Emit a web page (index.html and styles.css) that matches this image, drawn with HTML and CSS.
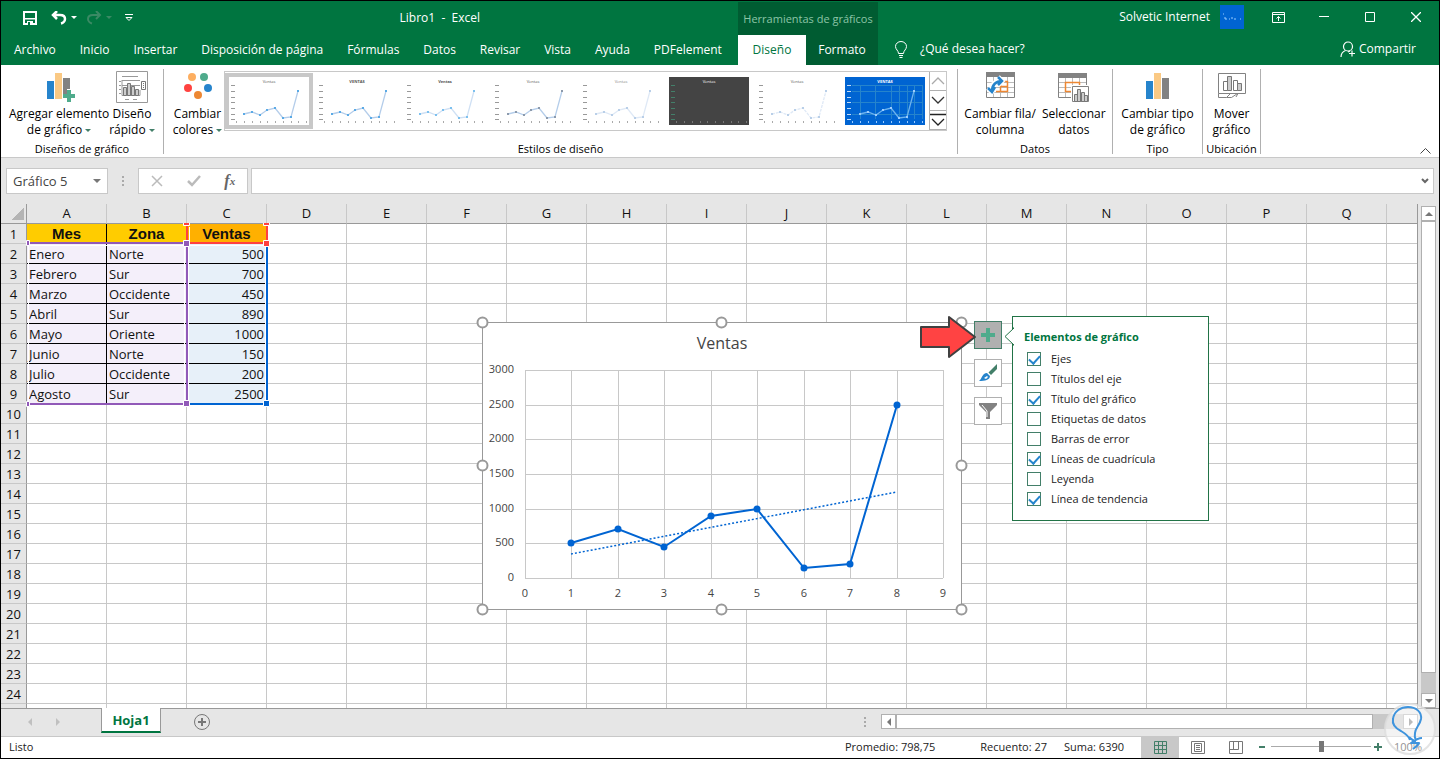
FILE: index.html
```html
<!DOCTYPE html>
<html lang="es">
<head>
  <meta charset="UTF-8" />
  <meta name="viewport" content="width=device-width, initial-scale=1.0"/>
  <title>Libro1 - Excel</title>
  <link rel="stylesheet" href="styles.css">
</head>
<body>
  <header class="header">
    <div class="header-left">
      <div class="title-row">
        <button class="icon-btn save" aria-label="Guardar">
          <svg width="14" height="14" viewBox="0 0 14 14"><path d="M1 1h12v12H1z" fill="none" stroke="#fff" stroke-width="2"/><path d="M2 7h10v1.500H2zM4 10h6v4H4z" fill="#fff"/><path d="M5 11h2v3H5z" fill="#007540"/></svg>
        </button>
        <button class="icon-btn undo" aria-label="Deshacer">
          <svg width="26" height="14" viewBox="0 0 26 14"><path d="M6 0L2 4l4 4M2 4h7c4 0 5 2 5 4s-2 4-4 4.500" fill="none" stroke="#fff" stroke-width="2.500"/><path d="M20 5h6l-3 3z" fill="#fff"/></svg>
        </button>
        <button class="icon-btn redo" aria-label="Rehacer">
          <svg width="26" height="14" viewBox="0 0 26 14"><path d="M10 0l4 4-4 4M14 4H7C3 4 2 6 2 8s2 4 4 4.500" fill="none" stroke="#3a8a64" stroke-width="2"/><path d="M20 5h6l-3 3z" fill="#3a8a64"/></svg>
        </button>
        <button class="icon-btn customize" aria-label="Personalizar barra">
          <svg width="8" height="8" viewBox="0 0 8 8"><path d="M0 .5h8M1 3.500l3 3 3-3z" fill="none" stroke="#fff"/></svg>
        </button>
        <span class="doc-title">Libro1 &nbsp;-&nbsp; Excel</span>
      </div>
      <nav class="tabs">
        <a href="#">Archivo</a>
        <a href="#">Inicio</a>
        <a href="#">Insertar</a>
        <a href="#">Disposición de página</a>
        <a href="#">Fórmulas</a>
        <a href="#">Datos</a>
        <a href="#">Revisar</a>
        <a href="#">Vista</a>
        <a href="#">Ayuda</a>
        <a href="#">PDFelement</a>
      </nav>
    </div>
    <div class="context">
      <div class="context-title">Herramientas de gráficos</div>
      <nav class="context-tabs">
        <a href="#" class="active">Diseño</a>
        <a href="#">Formato</a>
      </nav>
    </div>
    <div class="header-right">
      <div class="window-row">
        <span>Solvetic Internet</span>
        <span class="avatar"><svg width="24" height="24" viewBox="0 0 24 24"><path d="M3 9h1M5 12v2h2M9 14h1M11 13h2M14 14h2M20 14h1" fill="none" stroke="#9cf"/></svg></span>
        <button class="icon-btn win" aria-label="Opciones de cinta">
          <svg width="13" height="11" viewBox="0 0 13 11"><path d="M.5.500h12v10H.5zM.5 2.500h12M6.500 9V4.500M4.500 6.500l2-2 2 2" fill="none" stroke="#fff"/></svg>
        </button>
        <button class="icon-btn win" aria-label="Minimizar">
          <svg width="10" height="10" viewBox="0 0 10 10"><path d="M0 4.500h10" stroke="#fff"/></svg>
        </button>
        <button class="icon-btn win" aria-label="Maximizar">
          <svg width="10" height="10" viewBox="0 0 10 10"><path d="M.5.500h9v9h-9z" fill="none" stroke="#fff"/></svg>
        </button>
        <button class="icon-btn win" aria-label="Cerrar">
          <svg width="10" height="10" viewBox="0 0 10 10"><path d="M0 0l10 10M10 0L0 10" stroke="#fff" stroke-width="1.300"/></svg>
        </button>
      </div>
      <div class="search-row">
        <svg width="12" height="17" viewBox="0 0 12 17"><path d="M3.500 12.500c0-3-3-4-3-7a5.500 5 0 0 1 11 0c0 3-3 4-3 7zM4 14.500h4M4.500 16.500h3" fill="none" stroke="#fff"/></svg>
        <a href="#">¿Qué desea hacer?</a>
        <button class="share">
          <svg width="16" height="17" viewBox="0 0 16 17"><circle cx="8" cy="5.500" r="4.500" fill="none" stroke="#fff" stroke-width="1.200"/><path d="M1 16c0-3 2-5.500 4.500-6.500M8 11l2-1M12 9.500v6M9 12.500h6" fill="none" stroke="#fff" stroke-width="1.200"/></svg>
          Compartir
        </button>
      </div>
    </div>
  </header>

  <section class="ribbon">
    <div class="group layouts">
      <div class="tools">
        <button class="tool">
          <svg width="32" height="32" viewBox="0 0 32 32"><path fill="#2684cc" d="M4 10h7v18H4z"/><path fill="#fac984" d="M12 2h7v26h-7z"/><path fill="#828282" d="M20 7h7v11h-3v5h-4z"/><path fill="#4fab8c" d="M24 19h4v4h4v4h-4v4h-4v-4h-4v-4h4z"/></svg>
          <span>Agregar elemento<br>de gráfico <i class="caret"></i></span>
        </button>
        <button class="tool">
          <svg width="32" height="32" viewBox="0 0 32 32"><g fill="none" stroke="#999"><path d="M.5.500h31v31H.5z"/><path d="M6 5.500h16M3 10.500h2M3 14.500h2M3 18.500h2M3 22.500h2M9 28.500h4M17 28.500h4M6 9.500h18M6 14.500h18M6 9v15.500h18V19" /></g><path fill="#ccc" stroke="#777" d="M7.500 16.500h3v8h-3zM11.500 12.500h3v12h-3zM15.500 15.500h3v9h-3zM19.500 18.500h3v6h-3z"/><path fill="#fff" stroke="#777" d="M25.500 10.500h4v8h-4z"/><path stroke="#777" d="M27 12.500h1M27 14.500h1M27 16.500h1"/></svg>
          <span>Diseño<br>rápido <i class="caret"></i></span>
        </button>
      </div>
      <div class="group-name">Diseños de gráfico</div>
    </div>

    <div class="group styles">
      <div class="tools">
        <button class="tool colors">
          <svg width="32" height="32" viewBox="0 0 32 32"><circle cx="10" cy="6" r="4" fill="#fdae60"/><circle cx="22" cy="6" r="4" fill="#4fab8c"/><circle cx="6" cy="17" r="4" fill="#ff4340"/><circle cx="26" cy="17" r="4" fill="#2684cc"/><circle cx="16" cy="24" r="4" fill="#ed8733"/></svg>
          <span>Cambiar<br>colores <i class="caret"></i></span>
        </button>
        <div class="gallery">
          <div class="thumbs" id="thumbs"></div>
          <div class="gallery-nav">
            <button aria-label="Anterior"><svg width="14" height="8" viewBox="0 0 14 8"><path d="M1 7l6-6 6 6" fill="none" stroke="#aaa" stroke-width="1.300"/></svg></button>
            <button aria-label="Siguiente"><svg width="14" height="8" viewBox="0 0 14 8"><path d="M1 1l6 6 6-6" fill="none" stroke="#333" stroke-width="1.300"/></svg></button>
            <button aria-label="Más"><svg width="16" height="14" viewBox="0 0 16 14"><path d="M0 1.500h16M2 6l6 6 6-6" fill="none" stroke="#222" stroke-width="1.300"/></svg></button>
          </div>
        </div>
      </div>
      <div class="group-name">Estilos de diseño</div>
    </div>

    <div class="group data">
      <div class="tools">
        <button class="tool">
          <svg width="32" height="32" viewBox="0 0 32 32"><path fill="#fff" stroke="#828282" d="M2.500 2.500h28v24h-28z"/><path fill="#828282" d="M2 1h29v5H2z"/><path d="M3 11.500h27M3 16.500h27M3 21.500h27M9.500 6v20M16.500 6v20M23.500 6v20" stroke="#bbb"/><path d="M16.500 10.500h7v10h-7zM12 20.500h11.500M17 15.500h6.500" fill="none" stroke="#ed8733" stroke-width="1.500"/><path d="M7 20c0-6 4-10 10-10M14 6l4 4-4 4M4 17l3.500 4L11 17" fill="none" stroke="#fff" stroke-width="5"/><path d="M8 20c0-6 4-10 10-10M14 6l4 4-4 4M4 17l4 4 3-5" fill="none" stroke="#2684cc" stroke-width="2.500"/></svg>
          <span>Cambiar fila/<br>columna</span>
        </button>
        <button class="tool">
          <svg width="32" height="32" viewBox="0 0 32 32"><path fill="#fff" stroke="#828282" d="M.5 2.500h28v24H.5z"/><path fill="#828282" d="M0 2h29v5H0z"/><path d="M1 11.500h27M1 16.500h27M1 21.500h27M7.500 7v19M14.500 7v19M21.500 7v19" stroke="#bbb"/><path d="M14 20.500H7.500v-9h14V15" fill="none" stroke="#ed8733" stroke-width="1.500"/><path fill="#fff" d="M13 14h18v18H13z"/><path fill="#fff" stroke="#828282" d="M14.500 15.500h16v15h-16z"/><path fill="#ccc" stroke="#777" d="M16.500 23.500h3v7h-3zM19.500 18.500h3v12h-3zM23.500 21.500h3v9h-3zM26.500 24.500h3v6h-3z"/></svg>
          <span>Seleccionar<br>datos</span>
        </button>
      </div>
      <div class="group-name">Datos</div>
    </div>

    <div class="group type">
      <div class="tools">
        <button class="tool">
          <svg width="32" height="32" viewBox="0 0 32 32"><path fill="#2684cc" d="M5 10h7v18H5z"/><path fill="#fac984" d="M13 2h7v26h-7z"/><path fill="#828282" d="M21 7h7v21h-7z"/></svg>
          <span>Cambiar tipo<br>de gráfico</span>
        </button>
      </div>
      <div class="group-name">Tipo</div>
    </div>

    <div class="group place">
      <div class="tools">
        <button class="tool">
          <svg width="32" height="32" viewBox="0 0 32 32"><path fill="#fff" stroke="#828282" d="M2.500 2.500h27v20h-27zM2.500 22.500v4h8l5 0 6-4M10.500 26.500l4-4M20 26l2-3.500"/><path fill="#fff" stroke="#777" d="M7.500 10.500h4v9h-4zM17.500 9.500h4v10h-4z"/><path fill="#ccc" stroke="#777" d="M11.500 5.500h4v14h-4zM21.500 12.500h4v7h-4z"/></svg>
          <span>Mover<br>gráfico</span>
        </button>
      </div>
      <div class="group-name">Ubicación</div>
    </div>

    <button class="icon-btn collapse" aria-label="Contraer la cinta">
      <svg width="11" height="6" viewBox="0 0 11 6"><path d="M.5 5.500l5-5 5 5" fill="none" stroke="#444"/></svg>
    </button>
  </section>

  <section class="formula-bar">
    <div class="name-box">
      <select aria-label="Cuadro de nombres"><option>Gráfico 5</option></select>
    </div>
    <span class="grip"></span>
    <div class="fx-buttons">
      <button class="icon-btn" aria-label="Cancelar"><svg width="12" height="12" viewBox="0 0 12 12"><path d="M1 1l10 10M11 1L1 11" stroke="#bbb" stroke-width="1.500"/></svg></button>
      <button class="icon-btn" aria-label="Introducir"><svg width="14" height="12" viewBox="0 0 14 12"><path d="M1 6l4 4 8-9" fill="none" stroke="#bbb" stroke-width="2.500"/></svg></button>
      <button class="icon-btn fx" aria-label="Insertar función">f<small>x</small></button>
    </div>
    <div class="formula">
      <input type="text" aria-label="Barra de fórmulas">
      <svg width="8" height="6" viewBox="0 0 8 6"><path d="M1 1l3 3 3-3" fill="none" stroke="#666" stroke-width="2"/></svg>
    </div>
  </section>

  <main class="workspace">
    <div class="sheet">
      <table class="cells" id="cells"></table>

      <!-- ranges used by the chart -->
      <svg class="ranges" width="246" height="186" viewBox="0 0 246 186">
        <g fill="none" stroke="#fff">
          <path d="M2.500 23v156M3 22.500h156M158.500 22v158M162.500 22v158M163 22.500h76M239.500 22v158M163.500 4v15"/>
        </g>
        <g fill="none" stroke-width="2">
          <path stroke="#9159b8" d="M2 20h159v161H2"/>
          <path stroke="#0064d2" d="M241 20v161h-80"/>
          <path stroke="#ff4040" d="M161 2v18h80V2"/>
        </g>
        <g stroke="#fff">
          <path fill="#9159b8" d="M157.500 17.500h6v6h-6zM157.500 177.500h6v6h-6zM.5 17.500h3v5h-3zM.5 178.500h3v5h-3z"/>
          <path fill="#ff4040" d="M157.500-.5h6v3h-6zM237.500-.5h6v3h-6zM237.500 17.500h6v6h-6z"/>
          <path fill="#0064d2" d="M237.500 177.500h6v6h-6z"/>
        </g>
      </svg>

      <svg class="chart" id="chart" width="494" height="302" viewBox="0 0 494 302"></svg>

      <div class="chart-buttons">
        <button class="pressed" aria-label="Elementos de gráfico"><svg width="14" height="14" viewBox="0 0 14 14"><path d="M5 0h4v5h5v4H9v5H5V9H0V5h5z" fill="#4fab8c"/></svg></button>
        <button aria-label="Estilos de gráfico"><svg width="20" height="20" viewBox="0 0 20 20"><path d="M19 1v5l-6 6-2.500-2.500z" fill="#437f69"/><path d="M9 10l3 3c0 4-5 5-11 5 3-2 3-8 8-8z" fill="#2684cc"/><path d="M6 15l3-2 1 1-2 2z" fill="#fff"/></svg></button>
        <button aria-label="Filtros de gráfico"><svg width="20" height="20" viewBox="0 0 20 20"><path d="M1 2h18v2l-7 7v7H8v-7L1 4z" fill="#828282"/><path d="M4 4l5 6v6" fill="none" stroke="#fff"/></svg></button>
      </div>

      <div class="elements-panel">
        <svg class="pointer" width="10" height="19" viewBox="0 0 10 19"><path d="M10 0v1L1 9.500l9 8.500v1" fill="#fff" stroke="#217346"/></svg>
        <h2>Elementos de gráfico</h2>
        <label><input type="checkbox" checked>Ejes</label>
        <label><input type="checkbox">Títulos del eje</label>
        <label><input type="checkbox" checked>Título del gráfico</label>
        <label><input type="checkbox">Etiquetas de datos</label>
        <label><input type="checkbox">Barras de error</label>
        <label><input type="checkbox" checked>Líneas de cuadrícula</label>
        <label><input type="checkbox">Leyenda</label>
        <label><input type="checkbox" checked>Línea de tendencia</label>
      </div>

      <svg class="red-arrow" width="60" height="44" viewBox="0 0 60 44"><path d="M3 12h28V2l26 20-26 20V32H3z" fill="#ff4343" stroke="#404040" stroke-width="2" stroke-linejoin="round"/></svg>
    </div>
    <div class="v-scroll">
      <button aria-label="Subir"><i class="tri up"></i></button>
      <div class="v-thumb"></div>
      <div class="v-track"></div>
      <button aria-label="Bajar"><i class="tri down"></i></button>
    </div>
  </main>

  <section class="sheet-bar">
    <div class="sheet-nav"><i class="tri left"></i><i class="tri right"></i></div>
    <a href="#" class="sheet-tab">Hoja1</a>
    <button class="icon-btn add-sheet" aria-label="Hoja nueva"><svg width="16" height="16" viewBox="0 0 16 16"><circle cx="8" cy="8" r="7.500" fill="none" stroke="#777"/><path d="M8 4v8M4 8h8" stroke="#777" stroke-width="2"/></svg></button>
    <span class="grip"></span>
    <div class="h-scroll">
      <button aria-label="Izquierda"><i class="tri left"></i></button>
      <div class="h-thumb"></div>
      <div class="h-track"></div>
      <button aria-label="Derecha"><i class="tri right"></i></button>
    </div>
  </section>

  <footer class="status">
    <span>Listo</span>
    <span class="average">Promedio: 798,75</span>
    <span class="count">Recuento: 27</span>
    <span class="sum">Suma: 6390</span>
    <button class="view pressed" aria-label="Normal"><svg width="13" height="13" viewBox="0 0 13 13"><path d="M.5.500h12v12H.5zM.5 4.500h12M.5 8.500h12M4.500.500v12M8.500.500v12" fill="none" stroke="#437f69"/></svg></button>
    <button class="view" aria-label="Diseño de página"><svg width="14" height="13" viewBox="0 0 14 13"><path d="M.5.500h13v12H.5zM3.500 2.500h7v8h-7zM5 4.500h4M5 6.500h4M5 8.500h4" fill="none" stroke="#777"/></svg></button>
    <button class="view" aria-label="Salto de página"><svg width="14" height="13" viewBox="0 0 14 13"><path d="M.5.500h13v12H.5zM4.500.500v8M9.500.500v8M.5 8.500h9" fill="none" stroke="#777"/></svg></button>
    <button class="zoom-btn" aria-label="Alejar"><svg width="8" height="8" viewBox="0 0 8 8"><path d="M1 4h6" stroke="#437f69" stroke-width="2"/></svg></button>
    <input class="zoom" type="range" min="0" max="100" value="50" aria-label="Zoom">
    <button class="zoom-btn" aria-label="Acercar"><svg width="8" height="8" viewBox="0 0 8 8"><path d="M0 4h8M4 0v8" stroke="#437f69" stroke-width="2"/></svg></button>
    <span class="percent">100%</span>
  </footer>

  <svg class="watermark" width="56" height="56" viewBox="0 0 56 56">
    <circle cx="28" cy="28" r="25" fill="#fff" fill-opacity="0.500" stroke="#ddd" stroke-opacity="0.800" stroke-width="2"/>
    <path d="M28 39c-1-4-4-6-9-9-6-3-9-7-8-12C12 10 19 6 26 6c8 0 14 5 13 12-1 6-6 9-6 14 0 3-1 5 1 6M27 36c2 2 4 4 7 4M40 37c-3 0-7 2-11 5h8c-1 2-3 4-6 6" fill="none" stroke="#3f94dd" stroke-width="2" stroke-linejoin="round"/>
  </svg>

  <script>
    const rows = [
      ["Mes", "Zona", "Ventas"],
      ["Enero", "Norte", 500],
      ["Febrero", "Sur", 700],
      ["Marzo", "Occidente", 450],
      ["Abril", "Sur", 890],
      ["Mayo", "Oriente", 1000],
      ["Junio", "Norte", 150],
      ["Julio", "Occidente", 200],
      ["Agosto", "Sur", 2500]
    ];
    const letters = [..."ABCDEFGHIJKLMNOPQ", ""];

    // cells
    let html = "<tr><th class='corner'></th>" + letters.map(l => `<th>${l}</th>`).join("") + "</tr>";
    for (let r = 0; r < 25; r++) {
      html += `<tr><th>${r < 24 ? r + 1 : ""}</th>`;
      letters.forEach((l, c) => {
        const value = rows[r] && rows[r][c] !== undefined ? rows[r][c] : "";
        let cls = "";
        if (value !== "") {
          cls = r === 0 ? "head" : "filled";
          if (c === 2) cls += " sales";
        }
        html += `<td class="${cls}">${value}</td>`;
      });
      html += "</tr>";
    }
    document.getElementById("cells").innerHTML = html;

    // chart
    const sales = rows.slice(1).map(row => row[2]);
    const px = n => Math.round(51 + n * 46.44);
    const py = v => Math.round(263 - v * 208 / 3000);
    let svg = '<rect class="frame" x="8.500" y="7.500" width="479" height="287"/>';
    svg += '<text class="chart-title" x="248" y="34">Ventas</text>';
    for (let v = 0; v <= 3000; v += 500) {
      svg += `<path class="grid" d="M51 ${py(v) + 0.5}h418"/><text class="y-label" x="40" y="${py(v) + 3}">${v}</text>`;
    }
    for (let n = 0; n <= 9; n++) {
      svg += `<path class="grid" d="M${px(n) + 0.5} 55v208"/><text class="x-label" x="${px(n)}" y="282">${n}</text>`;
    }
    svg += `<path class="trend" d="M${px(1)} ${py(340)}L${px(8)} ${py(1245)}"/>`;
    svg += `<polyline class="line" points="${sales.map((v, i) => px(i + 1) + "," + py(v)).join(" ")}"/>`;
    sales.forEach((v, i) => {
      svg += `<circle class="dot" cx="${px(i + 1)}" cy="${py(v)}" r="3.500"/>`;
    });
    [[8.5, 7.5], [247.5, 7.5], [487.5, 7.5], [8.5, 150.5], [487.5, 150.5], [8.5, 294.5], [247.5, 294.5], [487.5, 294.5]].forEach(p => {
      svg += `<circle class="handle" cx="${p[0]}" cy="${p[1]}" r="5"/>`;
    });
    document.getElementById("chart").innerHTML = svg;

    // style gallery
    const looks = ["selected", "strong", "soft", "gray", "faint", "dark", "dashed", "blue"];
    const titles = ["Ventas", "VENTAS", "Ventas", "Ventas", "Ventas", "Ventas", "Ventas", "VENTAS"];
    const mini = [[15, 37], [23, 35], [31, 38], [38, 33], [46, 31], [54, 41], [62, 40], [69, 14]];
    const labelsY = [8, 14, 20, 25, 31, 37, 42];
    document.getElementById("thumbs").innerHTML = looks.map((look, i) => {
      let s = `<button class="thumb ${look}" aria-label="Estilo ${i + 1}"><svg width="80" height="48" viewBox="0 0 80 48">`;
      s += `<text x="40" y="6">${titles[i]}</text>`;
      s += `<path class="mini-grid" d="M7 8.500h70M7 14.500h70M7 25.500h70M7 37.500h70M15.500 8v34M30.500 8v34M46.500 8v34M54.500 8v34M62.500 8v34M69.500 8v34M77.500 8v34"/>`;
      s += `<path class="mini-label" d="${labelsY.map(y => `M2 ${y + 0.5}h4`).join("")}"/>`;
      for (let n = 0; n < 10; n++) {
        s += `<rect class="mini-num" x="${7 + n * 8 - Math.floor(n / 4)}" y="44" width="1" height="2"/>`;
      }
      s += `<polyline points="${mini.join(" ")}"/>`;
      mini.forEach(p => {
        s += `<rect class="mini-dot" x="${p[0] - 1}" y="${p[1] - 1}" width="2" height="2"/>`;
      });
      return s + "</svg></button>";
    }).join("");
  </script>
</body>
</html>
```
FILE: styles.css
```css
* {
  box-sizing: border-box;
}

body {
  margin: 0;
  height: 100vh;
  display: flex;
  flex-direction: column;
  border: 1px solid #000;
  font-family: "Open Sans", "Noto Sans", sans-serif;
  font-size: 12px;
  line-height: 16px;
  color: #222;
  background: #e6e6e6;
  overflow: hidden;
}

button,
input,
select {
  font: inherit;
  color: inherit;
  padding: 0;
  margin: 0;
  border: none;
  background: none;
}

a {
  color: inherit;
  text-decoration: none;
}

svg {
  display: block;
  flex-shrink: 0;
}

.icon-btn {
  display: flex;
  align-items: center;
  justify-content: center;
}

/* header */
.header {
  display: flex;
  height: 64px;
  flex-shrink: 0;
  background: #007540;
  color: #fff;
}

.header-left {
  width: 737px;
  display: flex;
  flex-direction: column;
}

.title-row {
  display: flex;
  align-items: center;
  height: 34px;
  padding-left: 22px;
}

.undo {
  margin-left: 14px;
}

.redo {
  margin-left: 9px;
}

.customize {
  margin-left: 13px;
}

.doc-title {
  margin-left: auto;
  margin-right: 258px;
}

.tabs {
  flex: 1;
  display: flex;
  align-items: center;
  justify-content: space-between;
  padding: 0 16px 0 13px;
}

.context {
  width: 140px;
  margin-top: 1px;
  display: flex;
  flex-direction: column;
  background: #005c32;
}

.context-title {
  height: 33px;
  line-height: 33px;
  text-align: center;
  font-size: 11px;
  color: #8cc5a7;
}

.context-tabs {
  flex: 1;
  display: flex;
}

.context-tabs a {
  flex: 1;
  line-height: 30px;
  text-align: center;
}

.context-tabs .active {
  flex: 0 0 68px;
  background: #fff;
  color: #007540;
}

.header-right {
  flex: 1;
}

.window-row {
  display: flex;
  align-items: center;
  justify-content: flex-end;
  height: 32px;
}

.window-row .win {
  width: 46px;
  height: 30px;
}

.avatar {
  width: 24px;
  height: 24px;
  margin: 0 11px 0 10px;
  background: #0064d2;
}

.search-row {
  display: flex;
  align-items: center;
  height: 32px;
  padding: 0 23px 0 17px;
  gap: 13px;
}

.share {
  display: flex;
  align-items: center;
  gap: 3px;
  margin-left: auto;
}

/* ribbon */
.ribbon {
  display: flex;
  height: 93px;
  flex-shrink: 0;
  padding: 4px 0 0;
  background: #fff;
  border-bottom: 1px solid #c8c8c8;
  color: #000;
}

.group {
  display: flex;
  flex-direction: column;
  height: 85px;
  border-right: 1px solid #b0b0b0;
}

.layouts {
  width: 163px;
}

.styles {
  width: 794px;
}

.data {
  width: 155px;
}

.type {
  width: 90px;
}

.place {
  width: 58px;
}

.tools {
  display: flex;
  justify-content: center;
  flex: 0 0 72px;
}

.tool {
  display: flex;
  flex-direction: column;
  align-items: center;
  gap: 3px;
  padding: 2px 3px 0;
  white-space: nowrap;
}

.layouts .tools {
  justify-content: flex-start;
  padding-left: 8px;
}

.layouts .tool {
  padding: 2px 0 0;
}

.styles .tools {
  justify-content: flex-start;
}

.styles .colors {
  width: 60px;
  padding: 2px 0 0 7px;
}

.group-name {
  text-align: center;
  font-size: 11px;
  line-height: 16px;
}

.caret {
  display: inline-block;
  vertical-align: 2px;
  border: 3px solid transparent;
  border-top-color: #437f69;
  border-bottom: none;
}

.gallery {
  display: flex;
  width: 723px;
  height: 60px;
  margin-top: 2px;
  border: 1px solid #c8c8c8;
}

.thumbs {
  flex: 1;
  display: flex;
}

.thumb {
  width: 88px;
  height: 56px;
  margin-top: 1px;
  display: flex;
  align-items: center;
  justify-content: center;
  color: #555;
}

.thumb text {
  font-size: 4px;
  text-anchor: middle;
  fill: currentColor;
}

.thumb polyline {
  fill: none;
  stroke: #b4cdea;
  stroke-width: 1.3;
}

.mini-grid {
  display: none;
  stroke: #2684cc;
}

.mini-label {
  stroke: #999;
}

.mini-num {
  fill: #aaa;
}

.mini-dot {
  fill: #5aaae6;
}

.selected {
  border: 4px solid #c8c8c8;
}

.strong text,
.soft text {
  font-weight: bold;
}

.soft polyline {
  stroke: #cfe0f4;
}

.soft .mini-dot {
  fill: #7cc0ee;
}

.gray .mini-dot {
  fill: #8c9aac;
}

.faint {
  color: #888;
}

.faint polyline,
.dashed polyline {
  stroke: #dfe9f6;
}

.faint .mini-dot,
.dashed .mini-dot {
  fill: #b9cfe8;
}

.dashed polyline {
  stroke-dasharray: 3 1;
}

.dark,
.blue {
  color: #fff;
}

.dark svg {
  background: #444;
}

.dark polyline,
.dark .mini-dot {
  display: none;
}

.dark .mini-label {
  stroke: #437f69;
}

.dark .mini-num {
  fill: #777;
}

.blue svg {
  background: #0064d2;
}

.blue text {
  font-weight: bold;
}

.blue .mini-grid {
  display: block;
}

.blue .mini-label {
  stroke: #c4dcf8;
}

.blue .mini-num,
.blue .mini-dot {
  fill: #9cccff;
}

.blue polyline {
  stroke: #6cb2ee;
}

.gallery-nav {
  width: 17px;
  display: flex;
  flex-direction: column;
}

.gallery-nav button {
  flex: 1;
  display: flex;
  align-items: center;
  justify-content: center;
  border-left: 1px solid #b0b0b0;
  border-bottom: 1px solid #b0b0b0;
}

.collapse {
  width: 13px;
  height: 10px;
  margin: 77px 7px 0 auto;
}

/* formula bar */
.formula-bar {
  display: flex;
  height: 46px;
  flex-shrink: 0;
  padding: 10px 5px 10px;
}

.name-box,
.fx-buttons,
.formula {
  display: flex;
  align-items: center;
  background: #fff;
  border: 1px solid #c8c8c8;
}

.name-box {
  position: relative;
  width: 102px;
}

.name-box select {
  width: 100%;
  height: 24px;
  padding-left: 6px;
  appearance: none;
  font-size: 13px;
  color: #444;
}

.name-box::after {
  content: "";
  position: absolute;
  right: 6px;
  top: 10px;
  border: 4px solid transparent;
  border-top-color: #777;
  border-bottom: none;
  pointer-events: none;
}

.grip {
  width: 2px;
  height: 10px;
  align-self: center;
  background: repeating-linear-gradient(#aaa 0 2px, transparent 2px 4px);
}

.name-box + .grip {
  margin: 0 14px;
}

.fx-buttons {
  width: 110px;
  justify-content: space-around;
}

.fx {
  font-family: "Liberation Serif", serif;
  font-style: italic;
  font-weight: bold;
  font-size: 16px;
  color: #666;
}

.fx small {
  font-size: 11px;
}

.formula {
  flex: 1;
  margin-left: 3px;
  padding-right: 4px;
}

.formula input {
  flex: 1;
  height: 24px;
  padding: 0 6px;
}

/* sheet */
.workspace {
  flex: 1;
  min-height: 0;
  display: flex;
  border-bottom: 1px solid #999;
}

.sheet {
  position: relative;
  flex: 1;
  min-width: 0;
  overflow: hidden;
  border-right: 1px solid #999;
}

.cells {
  width: 1466px;
  table-layout: fixed;
  border-collapse: separate;
  border-spacing: 0;
  font-size: 13px;
  line-height: 18px;
  color: #111;
}

.cells th,
.cells td {
  height: 20px;
  padding: 1px 2px 0;
  border-right: 1px solid #c8c8c8;
  border-bottom: 1px solid #c8c8c8;
  background: #fff;
}

.cells th {
  padding: 0;
  font-weight: normal;
  background: #e6e6e6;
}

.cells tr:first-child th {
  line-height: 16px;
  padding-bottom: 2px;
  border-bottom-color: #999;
}

.cells th:first-child {
  width: 26px;
  border-right-color: #999;
}

.cells .corner {
  background: linear-gradient(135deg, transparent 50%, #b4b4b4 50%) 10px 4px / 13px 12px no-repeat #e6e6e6;
}

.cells .filled {
  background: #f4effa;
  border-color: #000;
}

.cells .filled.sales {
  background: #e7f0f9;
  text-align: right;
}

.cells .head {
  background: #ffcc00;
  border-color: #000;
  font-family: "Liberation Sans", sans-serif;
  font-size: 15px;
  font-weight: bold;
  text-align: center;
}

.cells .head.sales {
  background: #ffb000;
}

.ranges {
  position: absolute;
  left: 25px;
  top: 19px;
}

.chart {
  position: absolute;
  left: 473px;
  top: 111px;
}

.frame {
  fill: #fff;
  stroke: #999;
}

.grid {
  stroke: #c8c8c8;
}

.chart text {
  fill: #444;
  font-size: 11px;
}

.chart .chart-title {
  font-size: 16px;
  text-anchor: middle;
}

.y-label {
  text-anchor: end;
}

.x-label {
  text-anchor: middle;
}

.line {
  fill: none;
  stroke: #0064d2;
  stroke-width: 2;
}

.trend {
  stroke: #0064d2;
  stroke-width: 1.5;
  stroke-dasharray: 2 2;
}

.dot {
  fill: #0064d2;
}

.handle {
  fill: #fff;
  stroke: #999;
  stroke-width: 2;
}

.chart-buttons {
  position: absolute;
  left: 973px;
  top: 117px;
  display: flex;
  flex-direction: column;
  gap: 10px;
}

.chart-buttons button {
  width: 28px;
  height: 28px;
  display: flex;
  align-items: center;
  justify-content: center;
  background: #fff;
  border: 1px solid #b0b0b0;
}

.chart-buttons .pressed {
  background: #b0b0b0;
  border-color: #437f69;
}

.elements-panel {
  position: absolute;
  left: 1011px;
  top: 112px;
  width: 197px;
  padding: 10px 11px 11px;
  background: #fff;
  border: 1px solid #217346;
  font-size: 11px;
}

.pointer {
  position: absolute;
  left: -9px;
  top: 10px;
}

.elements-panel h2 {
  margin: 0 0 2px;
  font-size: 11px;
  line-height: 20px;
  color: #007540;
}

.elements-panel label {
  display: flex;
  align-items: center;
  gap: 10px;
  height: 20px;
  padding-left: 3px;
}

.elements-panel input {
  appearance: none;
  width: 14px;
  height: 14px;
  border: 1px solid #437f69;
  display: flex;
  justify-content: center;
}

.elements-panel input:checked::after {
  content: "";
  width: 5px;
  height: 9px;
  border: solid #2684cc;
  border-width: 0 2px 2px 0;
  transform: rotate(42deg);
}

.red-arrow {
  position: absolute;
  left: 917px;
  top: 111px;
}

/* scroll bars */
.v-scroll {
  width: 21px;
  display: flex;
  flex-direction: column;
  padding: 2px 3px 0;
}

.v-scroll button,
.h-scroll button {
  width: 15px;
  height: 15px;
  display: flex;
  align-items: center;
  justify-content: center;
  background: #fff;
  border: 1px solid #b0b0b0;
}

.v-thumb {
  flex: 1;
  background: #fff;
  border: 1px solid #b0b0b0;
}

.v-track {
  height: 20px;
  background: #c8c8c8;
}

.tri {
  border: 4px solid transparent;
}

.up {
  border-bottom-color: #777;
  border-top: none;
}

.down {
  border-top-color: #777;
  border-bottom: none;
}

.left {
  border-right-color: #777;
  border-left: none;
}

.right {
  border-left-color: #777;
  border-right: none;
}

.sheet-bar {
  display: flex;
  align-items: center;
  height: 28px;
  flex-shrink: 0;
  padding: 0 21px 2px 0;
  border-bottom: 1px solid #c8c8c8;
}

.sheet-nav {
  display: flex;
  gap: 24px;
  width: 100px;
  padding-left: 27px;
}

.sheet-nav .left {
  border-right-color: #c0c0c0;
}

.sheet-nav .right {
  border-left-color: #c0c0c0;
}

.sheet-tab {
  width: 60px;
  height: 25px;
  margin: -1px 33px 0 0;
  align-self: flex-start;
  text-align: center;
  font-size: 13px;
  font-weight: bold;
  line-height: 25px;
  color: #007540;
  background: #fff;
  border: 1px solid #999;
  border-width: 0 1px 2px;
  border-bottom-color: #007540;
}

.sheet-bar .grip {
  margin: 0 15px 0 auto;
}

.h-scroll {
  display: flex;
  width: 537px;
}

.h-thumb {
  flex: 1;
  background: #fff;
  border: 1px solid #b0b0b0;
}

.h-track {
  width: 30px;
  background: #c8c8c8;
}

/* status bar */
.status {
  display: flex;
  align-items: center;
  height: 21px;
  flex-shrink: 0;
  padding: 0 17px 2px 8px;
  background: #fff;
  font-size: 11px;
}

.average {
  margin-left: auto;
}

.count {
  margin-left: 45px;
}

.sum {
  margin: 0 17px;
}

.view {
  width: 38px;
  height: 21px;
  align-self: flex-start;
  display: flex;
  align-items: center;
  justify-content: center;
}

.view.pressed {
  background: #c8c8c8;
}

.zoom-btn {
  width: 10px;
  display: flex;
  justify-content: center;
}

.view + .zoom-btn {
  margin-left: 2px;
}

.zoom {
  appearance: none;
  width: 100px;
  height: 12px;
  margin: 0 2px 0 4px;
  background: linear-gradient(#aaa, #aaa) center / 100% 1px no-repeat;
}

.zoom::-webkit-slider-thumb {
  appearance: none;
  width: 5px;
  height: 11px;
  background: #777;
}

.percent {
  margin-left: 11px;
}

.watermark {
  position: absolute;
  right: 2px;
  bottom: 2px;
}
```
